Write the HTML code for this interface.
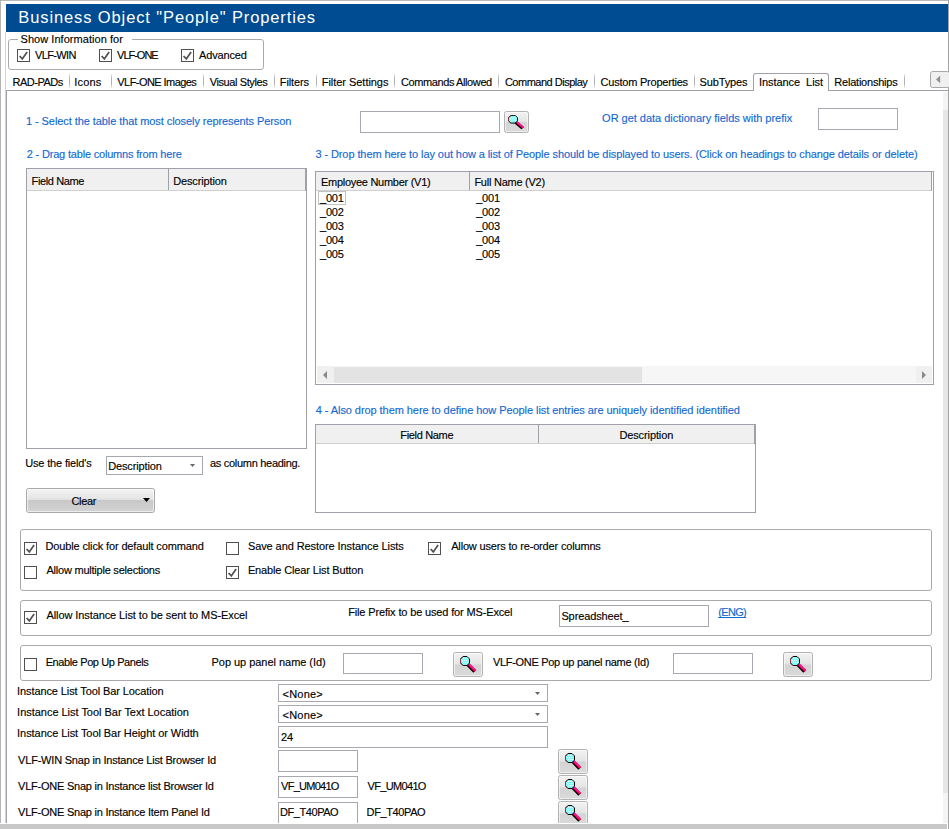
<!DOCTYPE html>
<html><head><meta charset="utf-8"><title>Business Object "People" Properties</title>
<style>
html,body{margin:0;padding:0;}
body{width:949px;height:829px;position:relative;overflow:hidden;background:#fff;font-family:"Liberation Sans",sans-serif;font-size:11px;line-height:14px;color:#000;}
body *{box-sizing:border-box;}
.a{position:absolute;}
.t{position:absolute;white-space:pre;-webkit-text-stroke:0.14px currentColor;}
.hdr{left:6px;top:4px;width:942px;height:28px;background:#004c92;}
.grp{border:1px solid #aaaaaa;border-radius:3px;}
.cb{width:13px;height:13px;border:1px solid #505050;background:#fff;}
.cb svg{position:absolute;left:-1px;top:-1px;}
.sep{width:1px;top:73px;height:16px;background:linear-gradient(rgba(176,176,184,0),#b2b2ba 30%,#b2b2ba 70%,rgba(176,176,184,0));}
.inp{border:1px solid #a8a8b0;background:#fff;}
.tbl{border:1px solid #a0a0a8;background:#fff;}
.th{background:#f0f0f0;border-bottom:1px solid #d0d0d0;}
.btn{border:1px solid #b2b2b2;border-radius:2.5px;background:linear-gradient(#f2f2f2 0%,#e4e4e4 48%,#d3d3d3 52%,#dadada 100%);box-shadow:inset 0 0 0 1px rgba(255,255,255,.55);}
</style></head><body>
<!-- window frame -->
<div class="a" style="left:0;top:0;width:949px;height:1px;background:#b8b8b8"></div>
<div class="a" style="left:0;top:0;width:1px;height:829px;background:#b4b4b4"></div>
<div class="a" style="left:948px;top:0;width:1px;height:829px;background:#a4a4a4"></div>
<div class="a hdr"></div>
<!-- tab page frame -->
<div class="a" style="left:5px;top:32px;width:1px;height:792px;background:#d4d4d8"></div>
<div class="a" style="left:6px;top:90px;width:1px;height:734px;background:#a0a0a8"></div>
<div class="a" style="left:6px;top:90px;width:942px;height:1px;background:#a0a0a8"></div>
<!-- selected tab -->
<div class="a" style="left:753px;top:73px;width:76px;height:18px;border:1px solid #a0a0a8;border-bottom:none;border-radius:3px 3px 0 0;background:#fff"></div>
<!-- tab scroll button -->
<div class="a" style="left:930px;top:71px;width:20px;height:17px;border:1px solid #a8a8a8;border-radius:2.5px;background:#f0f0f0"></div>
<svg class="a" style="left:935px;top:75px" width="8" height="10"><path d="M5.2 0.6 L1 4.4 L5.2 8.2 Z" fill="#929292"/></svg>
<!-- right scrollbar -->
<div class="a" style="left:943px;top:92px;width:5px;height:732px;background:#f4f4f4"></div>
<div class="a" style="left:943px;top:110px;width:5px;height:683px;background:#e6e6e6"></div>
<!-- Show information group -->
<div class="a grp" style="left:8px;top:39px;width:256px;height:31px"></div>
<div class="a cb" style="left:17px;top:49px"><svg width="13" height="13" viewBox="0 0 13 13"><path d="M2.6 7 L5.3 9.9 L10.1 2.9" fill="none" stroke="#505050" stroke-width="1.7"/></svg></div>
<div class="a cb" style="left:99px;top:49px"><svg width="13" height="13" viewBox="0 0 13 13"><path d="M2.6 7 L5.3 9.9 L10.1 2.9" fill="none" stroke="#505050" stroke-width="1.7"/></svg></div>
<div class="a cb" style="left:181px;top:49px"><svg width="13" height="13" viewBox="0 0 13 13"><path d="M2.6 7 L5.3 9.9 L10.1 2.9" fill="none" stroke="#505050" stroke-width="1.7"/></svg></div>
<div class="a cb" style="left:24px;top:542px"><svg width="13" height="13" viewBox="0 0 13 13"><path d="M2.6 7 L5.3 9.9 L10.1 2.9" fill="none" stroke="#505050" stroke-width="1.7"/></svg></div>
<div class="a cb" style="left:24px;top:566px"></div>
<div class="a cb" style="left:226px;top:542px"></div>
<div class="a cb" style="left:226px;top:566px"><svg width="13" height="13" viewBox="0 0 13 13"><path d="M2.6 7 L5.3 9.9 L10.1 2.9" fill="none" stroke="#505050" stroke-width="1.7"/></svg></div>
<div class="a cb" style="left:428px;top:542px"><svg width="13" height="13" viewBox="0 0 13 13"><path d="M2.6 7 L5.3 9.9 L10.1 2.9" fill="none" stroke="#505050" stroke-width="1.7"/></svg></div>
<div class="a cb" style="left:24px;top:611px"><svg width="13" height="13" viewBox="0 0 13 13"><path d="M2.6 7 L5.3 9.9 L10.1 2.9" fill="none" stroke="#505050" stroke-width="1.7"/></svg></div>
<div class="a cb" style="left:24px;top:658px"></div>
<div class="a sep" style="left:69px"></div>
<div class="a sep" style="left:111px"></div>
<div class="a sep" style="left:203px"></div>
<div class="a sep" style="left:274px"></div>
<div class="a sep" style="left:316px"></div>
<div class="a sep" style="left:394px"></div>
<div class="a sep" style="left:498px"></div>
<div class="a sep" style="left:594px"></div>
<div class="a sep" style="left:694px"></div>
<div class="a sep" style="left:904px"></div>
<div class="a inp" style="left:360px;top:111px;width:140px;height:22px"></div>
<div class="a btn" style="left:504px;top:111px;width:25px;height:22px"></div><svg class="a" style="left:508px;top:115px" width="18" height="15.4" viewBox="0 0 18 18" preserveAspectRatio="none">
<path d="M7.6 8.8 L14.4 15.6" stroke="#000" stroke-width="3" fill="none"/>
<path d="M8.6 8.2 L15.4 15" stroke="#e2003a" stroke-width="2.6" fill="none"/>
<path d="M8.8 8.0 L15.0 14.2" stroke="#ff18c8" stroke-width="1.1" fill="none"/>
<path d="M3 0.5 L7 0.5 L9.5 3 L9.5 7 L7 9.5 L3 9.5 L0.5 7 L0.5 3 Z" fill="#86f6f6" stroke="#000" stroke-width="1"/>
<path d="M3 0.5 L0.5 3 L0.5 7 L3 9.5" fill="none" stroke="#8a3a3a" stroke-width="1"/>
<path d="M3.2 2.5h1M5.2 2.5h1M7.2 2.5h1M2.2 4.5h1M4.2 4.5h1M6.2 4.5h1M3.2 6.5h1M5.2 6.5h1M7.2 6.5h1" stroke="#e8ffff" stroke-width="1" fill="none"/>
</svg>
<div class="a inp" style="left:818px;top:108px;width:80px;height:22px"></div>
<div class="a tbl" style="left:26px;top:168px;width:281px;height:281px"></div>
<div class="a th" style="left:27px;top:169px;width:278px;height:22px"></div>
<div class="a" style="left:168px;top:169px;width:1px;height:21px;background:#a0a0a8"></div>
<div class="a" style="left:305px;top:169px;width:1px;height:22px;background:#a0a0a8"></div>
<div class="a tbl" style="left:315px;top:171px;width:619px;height:214px"></div>
<div class="a th" style="left:316px;top:172px;width:615px;height:19px"></div>
<div class="a" style="left:469px;top:172px;width:1px;height:18px;background:#a0a0a8"></div>
<div class="a" style="left:931px;top:172px;width:1px;height:19px;background:#a0a0a8"></div>
<div class="a" style="left:318px;top:191px;width:28px;height:14px;border:1px solid #c2c2c2"></div>
<div class="a" style="left:317px;top:366px;width:615px;height:17px;background:#f6f6f6"></div>
<div class="a" style="left:317px;top:366px;width:17px;height:17px;background:#f0f0f0"></div>
<div class="a" style="left:916px;top:366px;width:16px;height:17px;background:#f0f0f0"></div>
<div class="a" style="left:334px;top:367px;width:308px;height:16px;background:#e3e3e3;border-radius:1px"></div>
<svg class="a" style="left:322px;top:370px" width="6" height="10"><path d="M5 1 L1 5 L5 9 Z" fill="#8a8a8a"/></svg>
<svg class="a" style="left:921px;top:370px" width="6" height="10"><path d="M1 1 L5 5 L1 9 Z" fill="#8a8a8a"/></svg>
<div class="a tbl" style="left:315px;top:424px;width:441px;height:89px"></div>
<div class="a th" style="left:316px;top:425px;width:438px;height:19px"></div>
<div class="a" style="left:538px;top:425px;width:1px;height:18px;background:#a0a0a8"></div>
<div class="a" style="left:754px;top:425px;width:1px;height:19px;background:#a0a0a8"></div>
<div class="a inp" style="left:106px;top:456px;width:97px;height:19px"></div>
<svg class="a" style="left:190px;top:464px" width="5" height="3"><path d="M0 0 L5 0 L2.5 3 Z" fill="#666"/></svg>
<div class="a" style="left:26px;top:488px;width:129px;height:25px;border:1px solid #a8a8a8;border-radius:2.5px;background:linear-gradient(#f4f4f4 0%,#e4e4e4 45%,#c8c8c8 50%,#d3d3d3 100%);box-shadow:inset 0 0 0 1px rgba(255,255,255,.6)"></div>
<svg class="a" style="left:143px;top:498px" width="7" height="4"><path d="M0 0 L7 0 L3.5 4 Z" fill="#000"/></svg>
<div class="a grp" style="left:20px;top:529px;width:912px;height:62px"></div>
<div class="a grp" style="left:20px;top:600px;width:912px;height:36px"></div>
<div class="a grp" style="left:20px;top:645px;width:912px;height:36px"></div>
<div class="a inp" style="left:559px;top:605px;width:150px;height:22px"></div>
<div class="a inp" style="left:343px;top:653px;width:80px;height:21px"></div>
<div class="a btn" style="left:453px;top:652px;width:30px;height:25px"></div><svg class="a" style="left:460px;top:656px" width="18" height="18" viewBox="0 0 18 18" preserveAspectRatio="none">
<path d="M7.6 8.8 L14.4 15.6" stroke="#000" stroke-width="3" fill="none"/>
<path d="M8.6 8.2 L15.4 15" stroke="#e2003a" stroke-width="2.6" fill="none"/>
<path d="M8.8 8.0 L15.0 14.2" stroke="#ff18c8" stroke-width="1.1" fill="none"/>
<path d="M3 0.5 L7 0.5 L9.5 3 L9.5 7 L7 9.5 L3 9.5 L0.5 7 L0.5 3 Z" fill="#86f6f6" stroke="#000" stroke-width="1"/>
<path d="M3 0.5 L0.5 3 L0.5 7 L3 9.5" fill="none" stroke="#8a3a3a" stroke-width="1"/>
<path d="M3.2 2.5h1M5.2 2.5h1M7.2 2.5h1M2.2 4.5h1M4.2 4.5h1M6.2 4.5h1M3.2 6.5h1M5.2 6.5h1M7.2 6.5h1" stroke="#e8ffff" stroke-width="1" fill="none"/>
</svg>
<div class="a inp" style="left:673px;top:653px;width:80px;height:21px"></div>
<div class="a btn" style="left:783px;top:652px;width:30px;height:25px"></div><svg class="a" style="left:790px;top:656px" width="18" height="18" viewBox="0 0 18 18" preserveAspectRatio="none">
<path d="M7.6 8.8 L14.4 15.6" stroke="#000" stroke-width="3" fill="none"/>
<path d="M8.6 8.2 L15.4 15" stroke="#e2003a" stroke-width="2.6" fill="none"/>
<path d="M8.8 8.0 L15.0 14.2" stroke="#ff18c8" stroke-width="1.1" fill="none"/>
<path d="M3 0.5 L7 0.5 L9.5 3 L9.5 7 L7 9.5 L3 9.5 L0.5 7 L0.5 3 Z" fill="#86f6f6" stroke="#000" stroke-width="1"/>
<path d="M3 0.5 L0.5 3 L0.5 7 L3 9.5" fill="none" stroke="#8a3a3a" stroke-width="1"/>
<path d="M3.2 2.5h1M5.2 2.5h1M7.2 2.5h1M2.2 4.5h1M4.2 4.5h1M6.2 4.5h1M3.2 6.5h1M5.2 6.5h1M7.2 6.5h1" stroke="#e8ffff" stroke-width="1" fill="none"/>
</svg>
<div class="a inp" style="left:278px;top:684px;width:270px;height:18px"></div>
<svg class="a" style="left:535px;top:692px" width="5" height="3"><path d="M0 0 L5 0 L2.5 3 Z" fill="#666"/></svg>
<div class="a inp" style="left:278px;top:705px;width:270px;height:18px"></div>
<svg class="a" style="left:535px;top:713px" width="5" height="3"><path d="M0 0 L5 0 L2.5 3 Z" fill="#666"/></svg>
<div class="a inp" style="left:278px;top:726px;width:270px;height:22px"></div>
<div class="a inp" style="left:278px;top:750px;width:80px;height:22px"></div>
<div class="a inp" style="left:278px;top:776px;width:80px;height:22px"></div>
<div class="a inp" style="left:278px;top:802px;width:80px;height:22px"></div>
<div class="a btn" style="left:558px;top:749px;width:30px;height:25px"></div><svg class="a" style="left:565px;top:753px" width="18" height="18" viewBox="0 0 18 18" preserveAspectRatio="none">
<path d="M7.6 8.8 L14.4 15.6" stroke="#000" stroke-width="3" fill="none"/>
<path d="M8.6 8.2 L15.4 15" stroke="#e2003a" stroke-width="2.6" fill="none"/>
<path d="M8.8 8.0 L15.0 14.2" stroke="#ff18c8" stroke-width="1.1" fill="none"/>
<path d="M3 0.5 L7 0.5 L9.5 3 L9.5 7 L7 9.5 L3 9.5 L0.5 7 L0.5 3 Z" fill="#86f6f6" stroke="#000" stroke-width="1"/>
<path d="M3 0.5 L0.5 3 L0.5 7 L3 9.5" fill="none" stroke="#8a3a3a" stroke-width="1"/>
<path d="M3.2 2.5h1M5.2 2.5h1M7.2 2.5h1M2.2 4.5h1M4.2 4.5h1M6.2 4.5h1M3.2 6.5h1M5.2 6.5h1M7.2 6.5h1" stroke="#e8ffff" stroke-width="1" fill="none"/>
</svg>
<div class="a btn" style="left:558px;top:775px;width:30px;height:25px"></div><svg class="a" style="left:565px;top:779px" width="18" height="18" viewBox="0 0 18 18" preserveAspectRatio="none">
<path d="M7.6 8.8 L14.4 15.6" stroke="#000" stroke-width="3" fill="none"/>
<path d="M8.6 8.2 L15.4 15" stroke="#e2003a" stroke-width="2.6" fill="none"/>
<path d="M8.8 8.0 L15.0 14.2" stroke="#ff18c8" stroke-width="1.1" fill="none"/>
<path d="M3 0.5 L7 0.5 L9.5 3 L9.5 7 L7 9.5 L3 9.5 L0.5 7 L0.5 3 Z" fill="#86f6f6" stroke="#000" stroke-width="1"/>
<path d="M3 0.5 L0.5 3 L0.5 7 L3 9.5" fill="none" stroke="#8a3a3a" stroke-width="1"/>
<path d="M3.2 2.5h1M5.2 2.5h1M7.2 2.5h1M2.2 4.5h1M4.2 4.5h1M6.2 4.5h1M3.2 6.5h1M5.2 6.5h1M7.2 6.5h1" stroke="#e8ffff" stroke-width="1" fill="none"/>
</svg>
<div class="a btn" style="left:558px;top:801px;width:30px;height:25px"></div><svg class="a" style="left:565px;top:805px" width="18" height="18" viewBox="0 0 18 18" preserveAspectRatio="none">
<path d="M7.6 8.8 L14.4 15.6" stroke="#000" stroke-width="3" fill="none"/>
<path d="M8.6 8.2 L15.4 15" stroke="#e2003a" stroke-width="2.6" fill="none"/>
<path d="M8.8 8.0 L15.0 14.2" stroke="#ff18c8" stroke-width="1.1" fill="none"/>
<path d="M3 0.5 L7 0.5 L9.5 3 L9.5 7 L7 9.5 L3 9.5 L0.5 7 L0.5 3 Z" fill="#86f6f6" stroke="#000" stroke-width="1"/>
<path d="M3 0.5 L0.5 3 L0.5 7 L3 9.5" fill="none" stroke="#8a3a3a" stroke-width="1"/>
<path d="M3.2 2.5h1M5.2 2.5h1M7.2 2.5h1M2.2 4.5h1M4.2 4.5h1M6.2 4.5h1M3.2 6.5h1M5.2 6.5h1M7.2 6.5h1" stroke="#e8ffff" stroke-width="1" fill="none"/>
</svg>
<span class="t" style="left:18.3px;top:6.5px;letter-spacing:0.885px;font-size:16.5px;line-height:20px;-webkit-text-stroke:0;color:#fff;">Business Object &quot;People&quot; Properties</span>
<span class="t" style="left:20.5px;top:32.0px;letter-spacing:0.047px;background:#fff;padding:0 9px 0 3px;margin-left:-3px;">Show Information for</span>
<span class="t" style="left:35.0px;top:48.0px;letter-spacing:-0.650px;">VLF-WIN</span>
<span class="t" style="left:117.1px;top:48.0px;letter-spacing:-1.017px;">VLF-ONE</span>
<span class="t" style="left:199.1px;top:48.0px;letter-spacing:-0.171px;">Advanced</span>
<span class="t" style="left:12.5px;top:75.0px;letter-spacing:-0.500px;">RAD-PADs</span>
<span class="t" style="left:74.2px;top:75.0px;letter-spacing:0.200px;">Icons</span>
<span class="t" style="left:117.3px;top:75.0px;letter-spacing:-0.562px;">VLF-ONE Images</span>
<span class="t" style="left:209.7px;top:75.0px;letter-spacing:-0.392px;">Visual Styles</span>
<span class="t" style="left:279.8px;top:75.0px;letter-spacing:-0.133px;">Filters</span>
<span class="t" style="left:321.8px;top:75.0px;letter-spacing:-0.043px;">Filter Settings</span>
<span class="t" style="left:401.0px;top:75.0px;letter-spacing:-0.400px;">Commands Allowed</span>
<span class="t" style="left:504.9px;top:75.0px;letter-spacing:-0.493px;">Command Display</span>
<span class="t" style="left:600.6px;top:75.0px;letter-spacing:-0.225px;">Custom Properties</span>
<span class="t" style="left:699.5px;top:75.0px;letter-spacing:-0.114px;">SubTypes</span>
<span class="t" style="left:759.0px;top:75.0px;letter-spacing:-0.062px;">Instance  List</span>
<span class="t" style="left:834.3px;top:75.0px;letter-spacing:-0.217px;">Relationships</span>
<span class="t" style="left:26.0px;top:114.0px;letter-spacing:-0.076px;color:#1269d2;">1 - Select the table that most closely represents Person</span>
<span class="t" style="left:602.1px;top:111.0px;letter-spacing:-0.018px;color:#1269d2;">OR get data dictionary fields with prefix</span>
<span class="t" style="left:26.8px;top:147.0px;letter-spacing:-0.187px;color:#1269d2;">2 - Drag table columns from here</span>
<span class="t" style="left:315.4px;top:147.0px;letter-spacing:-0.087px;color:#1269d2;">3 - Drop them here to lay out how a list of People should be displayed to users. (Click on headings to change details or delete)</span>
<span class="t" style="left:315.7px;top:403.0px;letter-spacing:-0.063px;color:#1269d2;">4 - Also drop them here to define how People list entries are uniquely identified identified</span>
<span class="t" style="left:31.6px;top:174.0px;letter-spacing:-0.389px;">Field Name</span>
<span class="t" style="left:173.2px;top:174.0px;letter-spacing:-0.140px;">Description</span>
<span class="t" style="left:321.0px;top:175.0px;letter-spacing:-0.279px;">Employee Number (V1)</span>
<span class="t" style="left:474.4px;top:175.0px;letter-spacing:-0.246px;">Full Name (V2)</span>
<span class="t" style="left:320.0px;top:191.0px;letter-spacing:-0.200px;">_001</span>
<span class="t" style="left:476.2px;top:191.0px;letter-spacing:-0.200px;">_001</span>
<span class="t" style="left:320.0px;top:205.0px;letter-spacing:-0.200px;">_002</span>
<span class="t" style="left:476.2px;top:205.0px;letter-spacing:-0.200px;">_002</span>
<span class="t" style="left:320.0px;top:219.0px;letter-spacing:-0.200px;">_003</span>
<span class="t" style="left:476.2px;top:219.0px;letter-spacing:-0.200px;">_003</span>
<span class="t" style="left:320.0px;top:233.0px;letter-spacing:-0.200px;">_004</span>
<span class="t" style="left:476.2px;top:233.0px;letter-spacing:-0.200px;">_004</span>
<span class="t" style="left:320.0px;top:247.0px;letter-spacing:-0.200px;">_005</span>
<span class="t" style="left:476.2px;top:247.0px;letter-spacing:-0.200px;">_005</span>
<span class="t" style="left:400.3px;top:428.0px;letter-spacing:-0.333px;">Field Name</span>
<span class="t" style="left:619.4px;top:428.0px;letter-spacing:-0.110px;">Description</span>
<span class="t" style="left:25.2px;top:456.0px;letter-spacing:-0.157px;">Use the field's</span>
<span class="t" style="left:108.2px;top:459.0px;letter-spacing:-0.140px;">Description</span>
<span class="t" style="left:210.0px;top:456.0px;letter-spacing:-0.294px;">as column heading.</span>
<span class="t" style="left:71.5px;top:494.0px;letter-spacing:-0.350px;">Clear</span>
<span class="t" style="left:45.5px;top:539.0px;letter-spacing:-0.139px;">Double click for default command</span>
<span class="t" style="left:46.5px;top:563.0px;letter-spacing:-0.229px;">Allow multiple selections</span>
<span class="t" style="left:247.9px;top:539.0px;letter-spacing:-0.083px;">Save and Restore Instance Lists</span>
<span class="t" style="left:247.9px;top:563.0px;letter-spacing:-0.139px;">Enable Clear List Button</span>
<span class="t" style="left:451.2px;top:539.0px;letter-spacing:-0.167px;">Allow users to re-order columns</span>
<span class="t" style="left:46.5px;top:608.0px;letter-spacing:-0.093px;">Allow Instance List to be sent to MS-Excel</span>
<span class="t" style="left:348.2px;top:605.0px;letter-spacing:-0.147px;">File Prefix to be used for MS-Excel</span>
<span class="t" style="left:561.4px;top:609.0px;letter-spacing:-0.109px;">Spreadsheet_</span>
<span class="t" style="left:718.2px;top:605.0px;letter-spacing:-0.650px;color:#1269d2;text-decoration:underline;text-decoration-skip-ink:none;">(ENG)</span>
<span class="t" style="left:45.7px;top:655.0px;letter-spacing:-0.400px;">Enable Pop Up Panels</span>
<span class="t" style="left:211.5px;top:655.0px;letter-spacing:-0.033px;">Pop up panel name (Id)</span>
<span class="t" style="left:493.0px;top:655.0px;letter-spacing:-0.317px;">VLF-ONE Pop up panel name (Id)</span>
<span class="t" style="left:17.1px;top:684.0px;letter-spacing:-0.103px;">Instance List Tool Bar Location</span>
<span class="t" style="left:17.1px;top:705.0px;letter-spacing:-0.023px;">Instance List Tool Bar Text Location</span>
<span class="t" style="left:17.1px;top:726.0px;letter-spacing:-0.059px;">Instance List Tool Bar Height or Width</span>
<span class="t" style="left:282.5px;top:687.0px;letter-spacing:0.220px;">&lt;None&gt;</span>
<span class="t" style="left:282.5px;top:708.0px;letter-spacing:0.220px;">&lt;None&gt;</span>
<span class="t" style="left:281.1px;top:730.0px;letter-spacing:-0.100px;">24</span>
<span class="t" style="left:18.1px;top:753.0px;letter-spacing:-0.205px;">VLF-WIN Snap in Instance List Browser Id</span>
<span class="t" style="left:18.1px;top:779.0px;letter-spacing:-0.231px;">VLF-ONE Snap in Instance list Browser Id</span>
<span class="t" style="left:18.1px;top:805.0px;letter-spacing:-0.238px;">VLF-ONE Snap in Instance Item Panel Id</span>
<span class="t" style="left:281.1px;top:779.0px;letter-spacing:-0.738px;">VF_UM041O</span>
<span class="t" style="left:367.6px;top:779.0px;letter-spacing:-0.675px;">VF_UM041O</span>
<span class="t" style="left:280.1px;top:805.0px;letter-spacing:-0.450px;">DF_T40PAO</span>
<span class="t" style="left:366.6px;top:805.0px;letter-spacing:-0.388px;">DF_T40PAO</span>
<div class="a" style="left:0;top:823px;width:947px;height:6px;background:#c8c8c8;border-top:1px solid #fff"></div>
</body></html>
